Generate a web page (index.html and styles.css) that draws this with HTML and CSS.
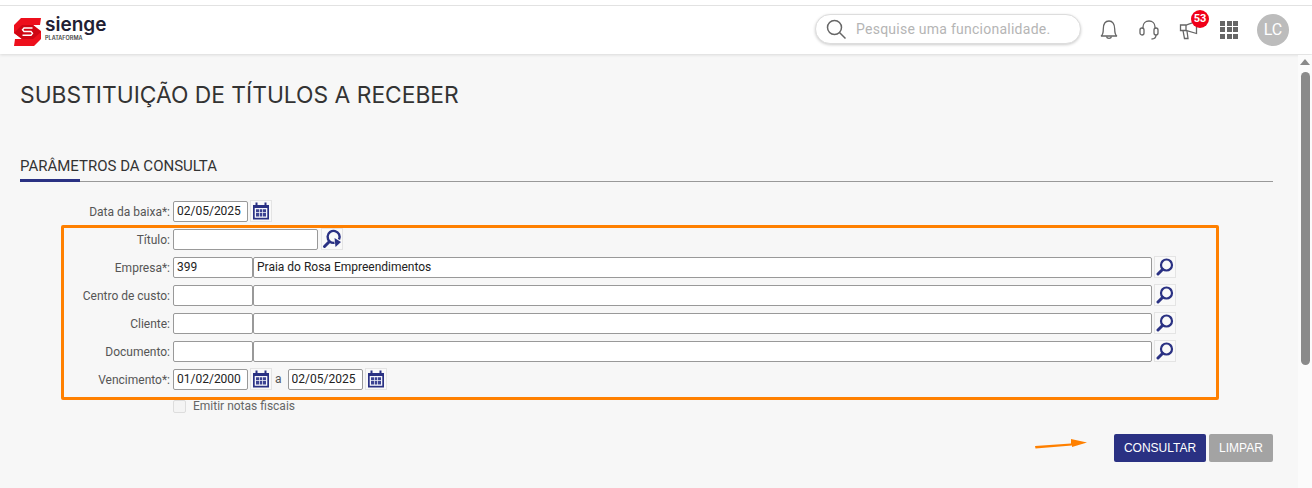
FILE: index.html
```html
<!DOCTYPE html>
<html lang="pt-BR">
<head>
  <meta charset="UTF-8">
  <title>Substituição de títulos a receber</title>
  <link rel="stylesheet" href="styles.css">
</head>
<body>
  <header class="topbar">
    <a class="logo">
      <svg class="logo-mark" width="27" height="28" viewBox="0 0 27 28">
        <path fill="#ed0f1c" d="M7 0H27L26 7H19L27 13V21L20 28H0L1 21H8L0 15V7Z"/>
        <path fill="#cf0613" d="M0 15L8 21H19L27 14L19 7H8Z"/>
        <path fill="none" stroke="#fff" stroke-width="1.400" d="M18.500 10H10L8.500 11.700L10 13.500H17L18.500 15.300L17 17.200H8.500"/>
      </svg>
      <span class="logo-text">
        <span class="logo-name">sienge</span>
        <span class="logo-sub">PLATAFORMA</span>
      </span>
    </a>
    <div class="top-right">
      <div class="search">
        <svg width="20" height="20" viewBox="0 0 20 20" fill="none" stroke="#666" stroke-width="1.500"><circle cx="8.500" cy="8.500" r="7"/><path d="M13.500 13.500L19.500 19.500"/></svg>
        <span>Pesquise uma funcionalidade.</span>
      </div>
      <div class="top-icons">
        <svg class="top-icon bell" width="18" height="20" viewBox="0 0 18 20" fill="none" stroke="#666" stroke-width="1.300"><path d="M1 16C3 15 3.300 13 3.300 9C3.300 4 5.500 1 9 1S14.700 4 14.700 9C14.700 13 15 15 17 16Z"/><path d="M6.500 16.500C7 19 11 19 11.500 16.500"/></svg>
        <svg class="top-icon" width="20" height="20" viewBox="0 0 20 20" fill="none" stroke="#666" stroke-width="1.300"><path d="M4 9V7C4 3.500 6.500 1 10 1S16 3.500 16 7V9"/><rect x="1" y="8" width="4" height="7" rx="2"/><rect x="15" y="8" width="4" height="7" rx="2"/><path d="M17 15C17 17.500 15 19 12.500 19"/></svg>
        <div class="megaphone">
          <svg width="20" height="20" viewBox="0 0 20 20" fill="none" stroke="#666" stroke-width="1.300"><path d="M1.500 5H7L17.500 1.500V13.500L7 10.500H1.500Z"/><path d="M7 5V10.500M4 10.500L5.500 18.500H9L8 11"/></svg>
          <span class="badge">53</span>
        </div>
        <div class="apps">
          <i></i><i></i><i></i><i></i><i></i><i></i><i></i><i></i><i></i>
        </div>
        <div class="avatar">LC</div>
      </div>
    </div>
  </header>

  <div class="scrollbar">
    <div class="scroll-up"></div>
    <div class="scroll-thumb"></div>
  </div>

  <main class="page">
    <h1 class="page-title">SUBSTITUIÇÃO DE TÍTULOS A RECEBER</h1>
    <h2 class="section-title"><span>PARÂMETROS DA CONSULTA</span></h2>

    <form class="form">
      <div class="row row-first">
        <label class="lbl">Data da baixa*:</label>
        <input class="inp inp-date" value="02/05/2025">
        <button type="button" class="icon-btn"><svg width="18" height="18"><use href="#cal"/></svg></button>
      </div>

      <div class="highlight">
        <div class="row">
          <label class="lbl">Título:</label>
          <input class="inp inp-title">
          <button type="button" class="icon-btn icon-btn-title"><svg width="20" height="20"><use href="#search-arrow"/></svg></button>
        </div>
        <div class="row">
          <label class="lbl">Empresa*:</label>
          <input class="inp inp-code" value="399">
          <input class="inp inp-name" value="Praia do Rosa Empreendimentos">
          <button type="button" class="icon-btn"><svg width="18" height="18"><use href="#lens"/></svg></button>
        </div>
        <div class="row">
          <label class="lbl">Centro de custo:</label>
          <input class="inp inp-code">
          <input class="inp inp-name">
          <button type="button" class="icon-btn"><svg width="18" height="18"><use href="#lens"/></svg></button>
        </div>
        <div class="row">
          <label class="lbl">Cliente:</label>
          <input class="inp inp-code">
          <input class="inp inp-name">
          <button type="button" class="icon-btn"><svg width="18" height="18"><use href="#lens"/></svg></button>
        </div>
        <div class="row">
          <label class="lbl">Documento:</label>
          <input class="inp inp-code">
          <input class="inp inp-name">
          <button type="button" class="icon-btn"><svg width="18" height="18"><use href="#lens"/></svg></button>
        </div>
        <div class="row">
          <label class="lbl">Vencimento*:</label>
          <input class="inp inp-date" value="01/02/2000">
          <button type="button" class="icon-btn"><svg width="18" height="18"><use href="#cal"/></svg></button>
          <span class="sep">a</span>
          <input class="inp inp-date" value="02/05/2025">
          <button type="button" class="icon-btn"><svg width="18" height="18"><use href="#cal"/></svg></button>
        </div>
      </div>

      <div class="check-row">
        <span class="check"></span>
        <span class="check-label">Emitir notas fiscais</span>
      </div>

      <div class="actions">
        <svg class="arrow" width="54" height="14" viewBox="0 0 54 14"><path fill="#ff8000" d="M0 10L36 7.500V3L52 6.500L37 11V9.500L0.500 12.500Z"/></svg>
        <button type="button" class="btn btn-primary">CONSULTAR</button>
        <button type="button" class="btn btn-muted">LIMPAR</button>
      </div>
    </form>
  </main>

  <svg class="defs" width="0" height="0">
    <defs>
      <symbol id="cal" viewBox="0 0 18 18">
        <path fill="#2a3183" d="M1 3H3.500V0.500H5.500V3H12.500V0.500H14.500V3H17V17.500H1Z"/>
        <path fill="#f4f5fb" d="M2.700 6H15.300V15.800H2.700Z"/>
        <path fill="#3c4392" d="M4 7.300H7V10.300H4ZM7.700 7.300H10.300V10.300H7.700ZM11 7.300H14V10.300H11ZM4 11H7V14.500H4ZM7.700 11H10.300V14.500H7.700ZM11 11H14V14.500H11Z"/>
      </symbol>
      <symbol id="lens" viewBox="0 0 18 18">
        <circle cx="10.500" cy="7" r="5.500" fill="none" stroke="#2a3183" stroke-width="2.200"/>
        <path d="M6.500 11.500L2 16" stroke="#2a3183" stroke-width="3" stroke-linecap="round"/>
      </symbol>
      <symbol id="search-arrow" viewBox="0 0 20 20">
        <path d="M17 10.500A6 6 0 1 0 12.500 13.800" fill="none" stroke="#2a3183" stroke-width="2.400"/>
        <path d="M7 13L2.500 17.500" stroke="#2a3183" stroke-width="3" stroke-linecap="round"/>
        <path d="M12.500 9L19 13L13.500 18Z" fill="#2a3183"/>
      </symbol>
    </defs>
  </svg>
</body>
</html>
```

FILE: styles.css
```css
* {
  box-sizing: border-box;
}
body {
  margin: 0;
  height: 488px;
  overflow: hidden;
  background: #f7f7f7;
  font-family: Roboto, "Liberation Sans", sans-serif;
  color: #333;
}
.defs {
  position: absolute;
}

/* top bar */
.topbar {
  height: 54px;
  padding: 5px 23px 0 14px;
  background: #fff;
  display: flex;
  align-items: center;
  justify-content: space-between;
  box-shadow: 0 1px 3px rgba(0, 0, 0, 0.12);
  position: relative;
}
.topbar::before {
  content: "";
  position: absolute;
  left: 0;
  right: 0;
  top: 5px;
  height: 1px;
  background: #e2e2e2;
}
.logo {
  display: flex;
  align-items: center;
  gap: 4px;
  margin-top: 5px;
}
.logo-text {
  display: flex;
  flex-direction: column;
  margin-top: -8px;
}
.logo-name {
  font-family: Inter, sans-serif;
  font-size: 19px;
  font-weight: 600;
  line-height: 20px;
  color: #1f2033;
}
.logo-sub {
  font-family: Inter, sans-serif;
  font-size: 5.500px;
  font-weight: 600;
  line-height: 7px;
  color: #444;
}
.top-right {
  display: flex;
  align-items: center;
  gap: 19px;
}
.search {
  width: 266px;
  height: 30px;
  margin-top: -1px;
  padding-left: 10px;
  display: flex;
  align-items: center;
  gap: 10px;
  background: #fff;
  border: 1px solid #ddd;
  border-radius: 15px;
  box-shadow: 0 1px 3px rgba(0, 0, 0, 0.2);
  font-size: 14px;
  letter-spacing: 0.25px;
  color: #b5b5b5;
}
.top-icons {
  display: flex;
  align-items: center;
  gap: 20px;
}
.bell {
  margin-right: 1px;
}
.megaphone {
  position: relative;
  height: 20px;
}
.badge {
  position: absolute;
  left: 12px;
  top: -10px;
  width: 18px;
  height: 18px;
  border-radius: 50%;
  background: #f00019;
  color: #fff;
  font-size: 11px;
  font-weight: 700;
  line-height: 18px;
  text-align: center;
}
.apps {
  display: grid;
  grid-template-columns: repeat(3, 5px);
  grid-auto-rows: 5px;
  gap: 1.500px;
  margin-left: 1px;
}
.apps i {
  background: #666;
}
.avatar {
  width: 32px;
  height: 32px;
  margin-left: -1px;
  border-radius: 50%;
  background: #bcbcbc;
  color: #fff;
  font-size: 16px;
  line-height: 32px;
  text-align: center;
}

/* scrollbar */
.scrollbar {
  position: absolute;
  top: 55px;
  right: 0;
  bottom: 0;
  width: 14px;
  background: #fbfbfb;
}
.scroll-up {
  width: 0;
  margin: 4px auto 0;
  border-left: 5px solid transparent;
  border-right: 5px solid transparent;
  border-bottom: 6px solid #8a8a8a;
}
.scroll-thumb {
  width: 9px;
  height: 293px;
  margin: 7px 0 0 3px;
  border-radius: 5px;
  background: #8a8a8a;
}

/* content */
.page {
  padding: 0 39px 0 20px;
}
.page-title {
  margin: 0;
  padding-top: 27px;
  font-family: Inter, sans-serif;
  font-size: 22.800px;
  font-weight: 400;
  line-height: 27px;
  color: #333;
}
.section-title {
  margin: 49px 0 0;
  border-bottom: 1px solid #999;
  font-size: 15px;
  font-weight: 400;
  line-height: 19px;
  color: #333;
}
.section-title span {
  display: inline-block;
  width: 60px;
  height: 25px;
  white-space: nowrap;
  border-bottom: 3px solid #2a3183;
  margin-bottom: -1px;
  vertical-align: bottom;
}

/* form */
.form {
  margin-top: 18px;
}
.row {
  display: flex;
  align-items: center;
  height: 22px;
  margin-bottom: 6px;
}
.row-first {
  margin-bottom: 0;
  padding-left: 41px;
}
.lbl {
  width: 109px;
  margin-right: 3px;
  padding-top: 1px;
  flex-shrink: 0;
  font-size: 12px;
  text-align: right;
  color: #555;
}
.inp {
  height: 21px;
  padding: 0 3px;
  background: #fff;
  border: 1px solid #999;
  border-radius: 2px;
  font-family: Roboto, sans-serif;
  font-size: 12px;
  color: #222;
  outline: none;
}
.inp-date {
  width: 75px;
}
.inp-title {
  width: 145px;
}
.inp-code {
  width: 80px;
}
.inp-name {
  width: 899px;
}
.icon-btn {
  width: 22px;
  height: 22px;
  padding: 0;
  margin-left: 2px;
  display: flex;
  align-items: center;
  justify-content: center;
  background: #f9f9f9;
  border: 1px solid #e4e4e4;
}
.icon-btn-title {
  margin-left: 3px;
}
.sep {
  margin: 0 6px 0 3px;
  font-size: 12px;
  color: #555;
}
.highlight {
  width: 1158px;
  height: 175px;
  margin: 3px 0 0 41px;
  padding: 0;
  border: 3px solid #ff8000;
  border-radius: 2px;
}
.highlight .lbl {
  width: 106px;
}
.check-row {
  display: flex;
  align-items: center;
  gap: 7px;
  margin: -1px 0 0 153px;
  height: 14px;
}
.check {
  width: 13px;
  height: 13px;
  background: #f4f4f4;
  border: 1px solid #ddd;
  border-radius: 2px;
}
.check-label {
  font-size: 12px;
  color: #666;
}
.actions {
  position: relative;
  display: flex;
  justify-content: flex-end;
  gap: 3px;
  margin-top: 21px;
}
.arrow {
  position: absolute;
  right: 184px;
  top: 2px;
}
.btn {
  height: 28px;
  padding: 0;
  border: 0;
  border-radius: 2px;
  font-family: "Liberation Sans", sans-serif;
  font-size: 12px;
  color: #fff;
}
.btn-primary {
  width: 92px;
  background: #2a3183;
}
.btn-muted {
  width: 64px;
  background: #a3a3a3;
}
```
